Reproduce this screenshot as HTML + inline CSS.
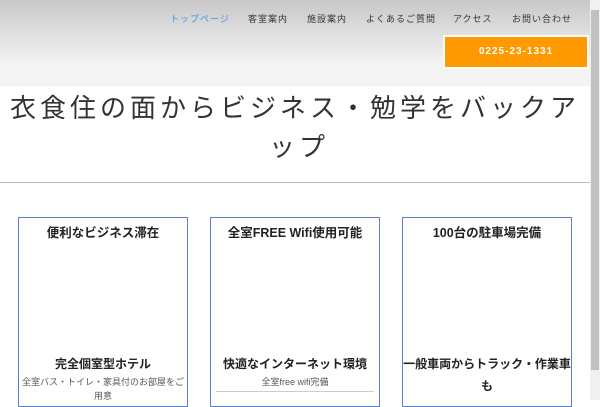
<!DOCTYPE html>
<html><head><meta charset="utf-8"><style>
*{margin:0;padding:0;box-sizing:border-box}
body{width:600px;height:400px;overflow:hidden;background:#fff;font-family:"Liberation Sans","Noto Sans CJK JP",sans-serif;position:relative;color:#333}
.hdr{position:absolute;left:0;top:0;width:590px;height:86px;background:linear-gradient(#c8c8c8,#f4f4f4 75%,#f4f4f4)}
.nav{position:absolute;top:12px;font-size:9px;letter-spacing:1px;color:#333}
.tel{position:absolute;left:443px;top:35px;width:146px;height:34px;background:#ff9900;border:2px solid #fff;color:#fff;font-weight:bold;font-size:10px;letter-spacing:1px;text-align:center;line-height:30px}
.t{position:absolute;font-size:26px;letter-spacing:4px;line-height:41px;color:#333;white-space:nowrap}
.line{position:absolute;left:0;top:182px;width:590px;height:1px;background:#bbb}
.card{position:absolute;top:217px;width:170px;height:190px;border:1px solid #5b7fce;text-align:center}
.card h3{font-size:12.5px;margin-top:4px;color:#222}
.card h4{font-size:12px;position:absolute;left:0;right:0;top:135px;color:#222;line-height:22px}
.card p{font-size:9px;position:absolute;left:1px;right:1px;top:157px;color:#555;line-height:14px;white-space:nowrap}
.sb{position:absolute;left:590px;top:0;width:10px;height:400px;background:#f0f0f0}
.th{position:absolute;left:591px;top:10px;width:8px;height:360px;background:#c1c1c1}
</style></head><body>
<div class="hdr"></div>
<div class="nav" style="left:170px;color:#4a90e2">トップページ</div>
<div class="nav" style="left:248px">客室案内</div>
<div class="nav" style="left:307px">施設案内</div>
<div class="nav" style="left:366px">よくあるご質問</div>
<div class="nav" style="left:453px">アクセス</div>
<div class="nav" style="left:512px">お問い合わせ</div>
<div class="tel">0225-23-1331</div>
<div class="t" style="left:10px;top:88px">衣食住の面からビジネス・勉学をバックア</div>
<div class="t" style="left:269px;top:127px">ップ</div>
<div class="line"></div>
<div class="card" style="left:18px"><h3>便利なビジネス滞在</h3><h4>完全個室型ホテル</h4><p>全室バス・トイレ・家具付のお部屋をご<br>用意</p></div>
<div class="card" style="left:210px"><h3>全室FREE Wifi使用可能</h3><h4>快適なインターネット環境</h4><p style="left:5px;right:5px;border-bottom:1px solid #ccc;padding-bottom:2px">全室free wifi完備</p></div>
<div class="card" style="left:402px"><h3>100台の駐車場完備</h3><h4>一般車両からトラック・作業車<br>も</h4></div>
<div class="sb"></div><div class="th"></div>
</body></html>
